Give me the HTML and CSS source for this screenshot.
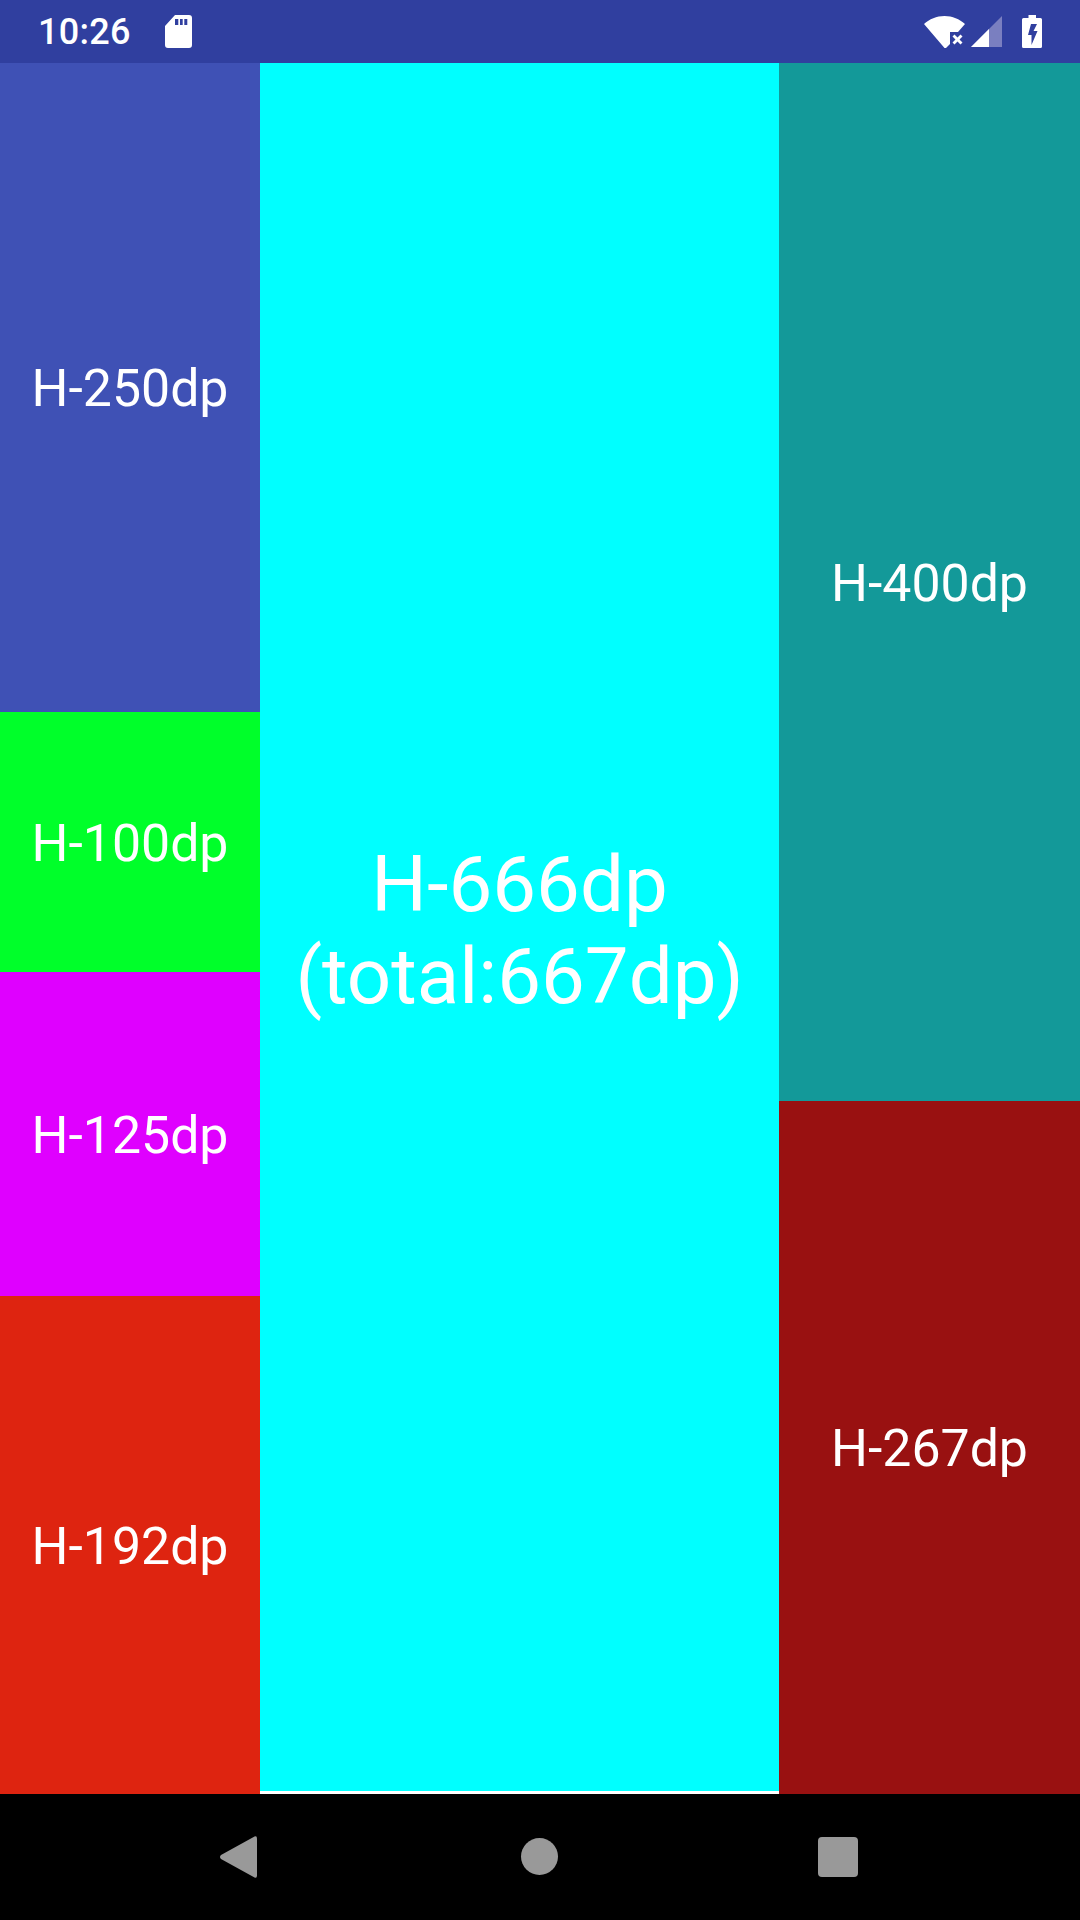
FILE: index.html
```html
<!DOCTYPE html>
<html lang="en">
<head>
    <meta charset="UTF-8" />
    <meta name="viewport" content="width=device-width, initial-scale=1.0" />
    <title>Heights</title>
    <link rel="stylesheet" href="styles.css">
</head>
<body>
    <div class="screen">
        <div class="status-bar">
            <div class="status-left">
                <span class="clock">10:26</span>
                <svg class="sd-icon" width="27" height="33" viewBox="0 0 27 33">
                    <path fill="#fff" fill-rule="evenodd" d="M10 0H24a3 3 0 0 1 3 3V30a3 3 0 0 1-3 3H3a3 3 0 0 1-3-3V11ZM10 4V10H13.300V4ZM15 4V10H17.700V4ZM19.300 4V10H22.300V4Z"/>
                </svg>
            </div>
            <div class="status-right">
                <svg class="wifi-icon" width="41" height="32" viewBox="0 0 41 32">
                    <path fill="#fff" d="M0 8C5.500 3 12.500 0 20.500 0S35.500 3 41 8L34 16H26V28L22 32H20.500Z"/>
                    <path fill="#fff" d="M28.500 20.500L30.500 18.500L33.500 21.500L36.500 18.500L38.500 20.500L35.500 23.500L38.500 26.500L36.500 28.500L33.500 25.500L30.500 28.500L28.500 26.500L31.500 23.500Z"/>
                </svg>
                <svg class="signal-icon" width="31" height="31" viewBox="0 0 31 31">
                    <path fill="#7a7fc0" d="M31 0V31H0Z"/>
                    <path fill="#fff" d="M18 13V31H0Z"/>
                </svg>
                <svg class="battery-icon" width="20" height="33" viewBox="0 0 20 33">
                    <path fill="#fff" fill-rule="evenodd" d="M6.500 0H14V3H18.500A1.500 1.500 0 0 1 20 4.500V31.500A1.500 1.500 0 0 1 18.500 33H1.500A1.500 1.500 0 0 1 0 31.500V4.500A1.500 1.500 0 0 1 1.500 3H6.500ZM9 9L6 20H9.500V30L15.500 16H11.500L15 9Z"/>
                </svg>
            </div>
        </div>

        <div class="columns">
            <div class="col col-left">
                <div class="box box-indigo box-250">H-250dp</div>
                <div class="box box-green box-100">H-100dp</div>
                <div class="box box-magenta box-125">H-125dp</div>
                <div class="box box-red box-192">H-192dp</div>
            </div>
            <div class="col col-middle">
                <div class="box box-cyan box-666">H-666dp<br>(total:667dp)</div>
            </div>
            <div class="col col-right">
                <div class="box box-teal box-400">H-400dp</div>
                <div class="box box-maroon box-267">H-267dp</div>
            </div>
        </div>

        <div class="nav-bar">
            <svg class="nav-back" width="37" height="42" viewBox="0 0 37 42">
                <path fill="#999" d="M34.500 0.500Q37 -0.500 37 2.500V39.500Q37 42.500 34.500 41.500L1 23Q-1 21 1 19Z"/>
            </svg>
            <div class="nav-home"></div>
            <div class="nav-recent"></div>
        </div>
    </div>
</body>
</html>
```

FILE: styles.css
```css
body {
    margin: 0;
    background: #000;
    font-family: Roboto, "Liberation Sans", sans-serif;
    color: #fff;
}

.screen {
    width: 1080px;
    height: 1920px;
    display: flex;
    flex-direction: column;
    overflow: hidden;
}

.status-bar {
    height: 63px;
    background: #303f9f;
    display: flex;
    align-items: center;
    justify-content: space-between;
    padding: 0 38px;
}

.status-left {
    display: flex;
    align-items: center;
    gap: 34px;
}

.clock {
    font-size: 36px;
    font-weight: 500;
    letter-spacing: 0.3px;
}

.status-right {
    display: flex;
    align-items: center;
    gap: 6px;
}

.battery-icon {
    margin-left: 14px;
}

.columns {
    display: flex;
    height: 1731px;
}

.col {
    display: flex;
    flex-direction: column;
}

.col-left {
    width: 260px;
}

.col-middle {
    width: 519px;
    background: #fff;
}

.col-right {
    width: 301px;
}

.box {
    display: flex;
    align-items: center;
    justify-content: center;
    text-align: center;
    font-size: 51.8px;
    box-sizing: border-box;
    padding-top: 2px;
}

.box-250 { height: 649px; }
.box-100 { height: 260px; }
.box-125 { height: 324px; }
.box-192 { height: 498px; }
.box-666 { height: 1728px; font-size: 78px; line-height: 92px; padding-top: 7px; }
.box-400 { height: 1038px; }
.box-267 { height: 693px; }

.box-indigo { background: #3f51b5; }
.box-green { background: #00ff2a; }
.box-magenta { background: #df00ff; }
.box-red { background: #de2410; }
.box-cyan { background: #00ffff; }
.box-teal { background: #139999; }
.box-maroon { background: #991111; }

.nav-bar {
    height: 126px;
    background: #000;
    position: relative;
}

.nav-back {
    position: absolute;
    left: 220px;
    top: 42px;
}

.nav-home {
    position: absolute;
    left: 521px;
    top: 44px;
    width: 37px;
    height: 37px;
    border-radius: 50%;
    background: #999;
}

.nav-recent {
    position: absolute;
    left: 818px;
    top: 43px;
    width: 40px;
    height: 40px;
    border-radius: 4px;
    background: #999;
}
```
